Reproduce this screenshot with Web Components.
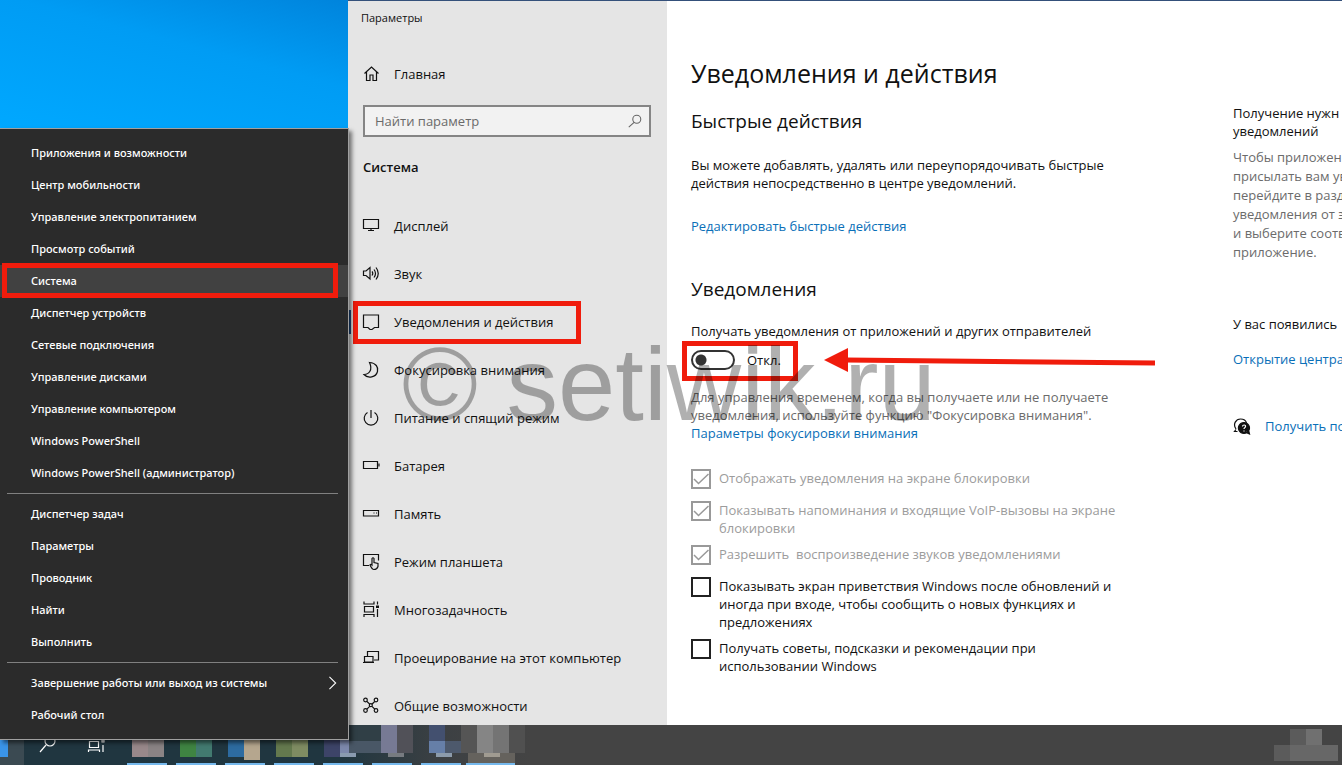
<!DOCTYPE html>
<html lang="ru">
<head>
<meta charset="utf-8">
<title>Параметры</title>
<style>
  html, body {
    margin: 0;
    height: 100%;
    overflow: hidden;
  }
  body {
    font-family: "Open Sans", "Noto Sans", sans-serif;
    font-size: 13px;
    line-height: 18px;
    color: #111;
    --accent: #0a6fb8;
    --mark: #f01c0c;
  }
</style>
</head>
<body>
<desktop-screen></desktop-screen>

<script>
const ICONS = {
  home: '<path d="M2.500 8.500 9.500 2l7 6.500M4.500 7v8.500h3.500V10h3v5.500h3.500V7"/>',
  display: '<path d="M1.500 2.500h15v9h-15zM9 11.500v2M6 13.500h6"/>',
  sound: '<path d="M1.500 6v4.500H4L8 14V2.500L4 6zM10 6.500q1.500 1.800 0 4M12 4.500q3 3.800 0 8M14 2.500q4.500 5.800 0 12"/>',
  message: '<path d="M1.500 2h15v12.500h-4L10 16.500H8l-2-2H1.500z"/>',
  moon: '<path d="M7.500 1.500C14 2 16.500 6 15.500 10.500 14 16.500 6 18 2 13.500c5 0 9-4.500 5.500-12z"/>',
  power: '<path d="M9 1v8M5.500 3.500a6.800 6.800 0 1 0 7 0"/>',
  battery: '<path d="M1.500 4.500h14v7h-14zM17 6.500v3"/>',
  storage: '<path d="M1.500 5.500h15V11h-15zM11.500 8h1M14 8h1"/>',
  tablet: '<path d="M7 12.500H1.500v-11h15v6M10 12V5.500q1-1.500 2 0v4l4 1v3q-1 3-4 3-2 0-4-4.500 1-1 2 0z"/>',
  tasks: '<path d="M2 .5v2.500h10V.5M2 16v-2.500h10V16M2.500 5.500h9v5.500h-9zM15.500.5v3M15.500 8v8"/><path d="M14 4.500h3v2.500h-3z" fill="currentColor" stroke="none"/>',
  project: '<path d="M5.500 8V2.500h11V11H12M2.500 7.500H11V13H2.500zM1 13.500h11"/>',
  shared: '<circle cx="3.500" cy="3" r="1.800"/><circle cx="14" cy="3" r="1.800"/><circle cx="3.500" cy="13.500" r="1.800"/><circle cx="14" cy="13.500" r="1.800"/><circle cx="8.800" cy="8.200" r="1.500"/><path d="m5 4.500 2.700 2.700m5-2.700-2.800 2.700m-5 5 2.800-2.800m5 2.800L10 9.400"/>',
  search: '<circle cx="11" cy="7" r="4.500"/><path d="m8 10.500-6 5.500"/>',
  help: '<path d="M3 12.500 1.500 14.500h3M3 12C-.5 7 3 2 7.500 2 11 2 13 4 13.500 6"/><path d="M11 5.500a5.500 5.500 0 1 1-.1 0zM12 15l4.500 2-1-4z" fill="currentColor"/><path d="M9.500 9.500c0-2 3.500-2 3 .2-.2 1-1.500 1-1.500 2.300M11 13.500v1" stroke="#fff"/>',
  chevron: '<path d="m5 2 7 7-7 7"/>'
};

// Registers an element whose shadow root is filled from a markup function
function define(name, render) {
  customElements.define(name, class extends HTMLElement {
    constructor() {
      super();
      this.attachShadow({ mode: 'open' });
    }
    connectedCallback() {
      this.shadowRoot.innerHTML = render(this);
    }
  });
}

define('ui-icon', (el) => `
  <style>
    :host { display: block; flex: none; width: 18px; height: 18px; }
    svg { display: block; width: 100%; height: 100%; }
  </style>
  <svg viewBox="0 0 18 18" fill="none" stroke="currentColor" stroke-width="1.2" aria-hidden="true">${ICONS[el.getAttribute('name')]}</svg>
`);

define('menu-item', (el) => `
  <style>
    :host { display: block; position: relative; }
    button {
      display: flex;
      align-items: center;
      justify-content: space-between;
      width: 100%;
      height: 32px;
      padding: 0 7px 0 31px;
      border: 0;
      background: transparent;
      color: #fff;
      font: 500 11px/16px "Noto Sans", "Open Sans", sans-serif;
      text-align: left;
    }
    :host([active]) button { background: #414141; }
    .mark {
      position: absolute;
      inset: -2px 10px -1px 2px;
      border: 5px solid var(--mark);
    }
    ui-icon { width: 16px; height: 16px; }
  </style>
  <button type="button"><slot></slot>${el.hasAttribute('submenu') ? '<ui-icon name="chevron"></ui-icon>' : ''}</button>
  ${el.hasAttribute('active') ? '<div class="mark"></div>' : ''}
`);

define('start-menu', () => `
  <style>
    :host {
      display: block;
      box-sizing: border-box;
      width: 349px;
      padding: 8px 0;
      background: #2b2b2b;
      border: solid #a0a0a0;
      border-width: 1px 1px 1px 0;
      box-shadow: 3px 3px 4px rgba(0, 0, 0, .5);
    }
    hr {
      height: 1px;
      margin: 4px 10px 4px 7px;
      border: 0;
      background: #808080;
    }
  </style>
  <menu-item>Приложения и возможности</menu-item>
  <menu-item>Центр мобильности</menu-item>
  <menu-item>Управление электропитанием</menu-item>
  <menu-item>Просмотр событий</menu-item>
  <menu-item active>Система</menu-item>
  <menu-item>Диспетчер устройств</menu-item>
  <menu-item>Сетевые подключения</menu-item>
  <menu-item>Управление дисками</menu-item>
  <menu-item>Управление компьютером</menu-item>
  <menu-item>Windows PowerShell</menu-item>
  <menu-item>Windows PowerShell (администратор)</menu-item>
  <hr>
  <menu-item>Диспетчер задач</menu-item>
  <menu-item>Параметры</menu-item>
  <menu-item>Проводник</menu-item>
  <menu-item>Найти</menu-item>
  <menu-item>Выполнить</menu-item>
  <hr>
  <menu-item submenu>Завершение работы или выход из системы</menu-item>
  <menu-item>Рабочий стол</menu-item>
`);

define('nav-item', (el) => `
  <style>
    :host { display: block; flex: none; position: relative; }
    a {
      display: flex;
      align-items: center;
      gap: 14px;
      height: 48px;
      padding-left: 14px;
      color: #111;
      text-decoration: none;
      white-space: nowrap;
    }
    :host([compact]) a { height: 32px; }
    :host([active])::before {
      content: "";
      position: absolute;
      left: 0;
      top: 12px;
      width: 3px;
      height: 24px;
      background: #1f4a80;
    }
    .mark {
      position: absolute;
      left: 5px;
      top: 3px;
      width: 218px;
      height: 33px;
      border: 5px solid var(--mark);
    }
  </style>
  <a href="#"><ui-icon name="${el.getAttribute('icon')}"></ui-icon><slot></slot></a>
  ${el.hasAttribute('active') ? '<div class="mark"></div>' : ''}
`);

define('settings-nav', () => `
  <style>
    :host {
      display: flex;
      flex-direction: column;
      background: #e5e5e5;
      overflow: hidden;
    }
    .title { padding: 9px 13px 0; font-size: 11px; line-height: 16px; }
    .home { margin-top: 32px; }
    .search {
      display: flex;
      flex: none;
      align-items: center;
      box-sizing: border-box;
      height: 32px;
      margin: 15px 16px 0 15px;
      padding: 0 6px 0 10px;
      border: 2px solid #858585;
      background: #f2f2f2;
      color: #666;
    }
    input {
      flex: 1;
      min-width: 0;
      padding: 0;
      border: 0;
      outline: 0;
      background: transparent;
      font: inherit;
    }
    input::placeholder { color: #6a6a6a; opacity: 1; }
    .search ui-icon { width: 16px; height: 16px; }
    h2 { margin: 21px 15px 26px; font-size: 13px; font-weight: 600; line-height: 18px; }
  </style>
  <div class="title">Параметры</div>
  <nav-item class="home" icon="home" compact>Главная</nav-item>
  <label class="search"><input type="text" placeholder="Найти параметр" aria-label="Найти параметр"><ui-icon name="search"></ui-icon></label>
  <h2>Система</h2>
  <nav>
    <nav-item icon="display">Дисплей</nav-item>
    <nav-item icon="sound">Звук</nav-item>
    <nav-item icon="message" active>Уведомления и действия</nav-item>
    <nav-item icon="moon">Фокусировка внимания</nav-item>
    <nav-item icon="power">Питание и спящий режим</nav-item>
    <nav-item icon="battery">Батарея</nav-item>
    <nav-item icon="storage">Память</nav-item>
    <nav-item icon="tablet">Режим планшета</nav-item>
    <nav-item icon="tasks">Многозадачность</nav-item>
    <nav-item icon="project">Проецирование на этот компьютер</nav-item>
    <nav-item icon="shared">Общие возможности</nav-item>
  </nav>
`);

define('check-row', (el) => `
  <style>
    :host { display: block; }
    label {
      display: flex;
      gap: 8px;
      min-height: 24px;
      white-space: pre-wrap;
    }
    :host([locked]) label { color: #9c9c9c; }
    input {
      appearance: none;
      flex: none;
      box-sizing: border-box;
      width: 20px;
      height: 20px;
      margin: 0;
      border: 2px solid #222;
      background: #fff;
    }
    input:disabled { border-color: #999; }
    input:checked {
      background-image: url("data:image/svg+xml,%3Csvg xmlns='http://www.w3.org/2000/svg' viewBox='0 0 16 16'%3E%3Cpath d='m1 8 4.500 4.500L15.500 3' fill='none' stroke='%23999' stroke-width='1.500'/%3E%3C/svg%3E");
    }
  </style>
  <label><input type="checkbox" ${el.hasAttribute('locked') ? 'checked disabled' : ''}><span><slot></slot></span></label>
`);

define('toggle-switch', () => `
  <style>
    :host { display: block; position: relative; width: fit-content; }
    label { display: flex; align-items: center; gap: 12px; height: 20px; }
    input {
      appearance: none;
      box-sizing: border-box;
      width: 44px;
      height: 20px;
      margin: 0;
      border: 2px solid #333;
      border-radius: 10px;
      background: radial-gradient(circle at 8px 8px, #333 5px, transparent 6px) #fff;
    }
    .mark {
      position: absolute;
      inset: -9px -17px -11px -9px;
      border: 5px solid var(--mark);
    }
  </style>
  <label><input type="checkbox" role="switch"><slot></slot></label>
  <div class="mark"></div>
`);

define('settings-page', () => `
  <style>
    :host {
      display: grid;
      grid-template-columns: 430px minmax(0, 1fr);
      column-gap: 112px;
      padding: 54px 0 0 24px;
      background: #fff;
      overflow: hidden;
    }
    h1 { margin: 0 0 16px; font-size: 25px; font-weight: 400; line-height: 36px; white-space: nowrap; }
    h2 { margin: 0; font-size: 19px; font-weight: 400; line-height: 28px; }
    p { margin: 0; white-space: pre-line; }
    a { color: var(--accent); text-decoration: none; white-space: nowrap; }
    .quick p { margin: 21px 0 25px; }
    .notices { margin-top: 40px; }
    .notices h2 { margin-bottom: 19px; }
    toggle-switch { margin: 10px 0 18px; }
    .muted { color: #6b6b6b; }
    .checks { display: grid; gap: 8px; margin-top: 27px; }
    aside { padding-top: 49px; }
    aside p { white-space: pre; }
    aside .muted { margin: 8px 0 53px; line-height: 19px; }
    aside .center { display: block; margin: 17px 0 49px; }
    .support { display: flex; align-items: center; gap: 14px; }
  </style>
  <main>
    <h1>Уведомления и действия</h1>
    <section class="quick">
      <h2>Быстрые действия</h2>
      <p>Вы можете добавлять, удалять или переупорядочивать быстрые
действия непосредственно в центре уведомлений.</p>
      <a href="#">Редактировать быстрые действия</a>
    </section>
    <section class="notices">
      <h2>Уведомления</h2>
      <p>Получать уведомления от приложений и других отправителей</p>
      <toggle-switch>Откл.</toggle-switch>
      <p class="muted">Для управления временем, когда вы получаете или не получаете
уведомления, используйте функцию "Фокусировка внимания".</p>
      <a href="#">Параметры фокусировки внимания</a>
      <div class="checks">
        <check-row locked>Отображать уведомления на экране блокировки</check-row>
        <check-row locked>Показывать напоминания и входящие VoIP-вызовы на экране
блокировки</check-row>
        <check-row locked>Разрешить  воспроизведение звуков уведомлениями</check-row>
        <check-row>Показывать экран приветствия Windows после обновлений и
иногда при входе, чтобы сообщить о новых функциях и
предложениях</check-row>
        <check-row>Получать советы, подсказки и рекомендации при
использовании Windows</check-row>
      </div>
    </section>
  </main>
  <aside>
    <p>Получение нужн
уведомлений</p>
    <p class="muted">Чтобы приложен
присылать вам ув
перейдите в разд
уведомления от э
и выберите соотв
приложение.</p>
    <p>У вас появились</p>
    <a class="center" href="#">Открытие центра</a>
    <div class="support"><ui-icon name="help"></ui-icon><a href="#">Получить по</a></div>
  </aside>
`);

define('task-bar', () => {
  // x, y, width, height, colour of the pixelated app tiles
  const tiles = [
    [0, 0, 24, 40, '#3b4a52'], [0, 15, 8, 17, '#3a94e8'],
    [132, 15, 16, 17, '#98888a'], [148, 15, 16, 17, '#8a8384'],
    [180, 15, 16, 17, '#3f8442'], [196, 15, 16, 17, '#427a70'],
    [228, 15, 16, 17, '#2d6ba0'], [244, 15, 16, 20, '#b5a68e'],
    [276, 15, 16, 17, '#64794e'], [292, 15, 16, 17, '#7f8c62'],
    [324, 15, 16, 17, '#3d4468'], [340, 15, 16, 17, '#7c88ac'],
    [349, 0, 32, 16, '#303f46'], [349, 16, 32, 12, '#495766'],
    [381, 0, 16, 28, '#777a94'], [397, 0, 16, 28, '#515158'],
    [429, 0, 16, 16, '#43506f'], [429, 16, 16, 12, '#667fa8'],
    [445, 16, 16, 12, '#4d596c'], [461, 0, 16, 28, '#555'],
    [477, 0, 16, 28, '#858585'], [493, 0, 16, 28, '#747474'],
    [509, 0, 16, 28, '#505050'],
    [340, 28, 16, 4, '#8a9bb0'], [388, 28, 16, 4, '#777b80'],
    [436, 28, 16, 4, '#8c9bab'], [468, 28, 47, 10, '#65625d'], [484, 28, 16, 4, '#a09b91']
  ];
  const active = [[127, 40], [176, 40], [225, 40], [274, 40], [323, 40], [372, 40], [421, 40], [466, 49]];
  return `
    <style>
      :host {
        display: flex;
        justify-content: space-between;
        height: 40px;
        background: linear-gradient(90deg, #203640 340px, #3c4043 440px, #444 530px);
        overflow: hidden;
      }
      svg { display: block; flex: none; }
    </style>
    <svg width="540" height="40" aria-hidden="true">
      ${tiles.map(([x, y, w, h, c]) => `<rect x="${x}" y="${y}" width="${w}" height="${h}" fill="${c}"/>`).join('')}
      ${active.map(([x, w]) => `<rect x="${x}" y="38" width="${w}" height="2" fill="#76b9ed"/>`).join('')}
      <g fill="none" stroke="#fff" stroke-width="1.2">
        <circle cx="50" cy="16" r="5"/><path d="m46 20-6 7"/>
        <path d="M89.500 16.500h9v6h-9zM88.500 27v-2h11v2M103 20v7"/><path d="M102 15h2v2h-2z"/>
      </g>
    </svg>
    <svg width="70" height="40" aria-hidden="true">
      <path d="M2 20h16V4h32v16h16v16H2z" fill="#5b5b5b"/>
      <path d="M18 20h48v16H18z" fill="#676767"/>
      <path d="M34 4h16v16H34z" fill="#707070"/>
    </svg>
  `;
});

define('desktop-screen', () => `
  <style>
    :host {
      display: grid;
      grid-template-rows: minmax(0, 1fr) auto;
      position: relative;
      height: 100vh;
      overflow: hidden;
      background: linear-gradient(15deg, #00a8ff 0, #009cf4 60%, #0084dc 100%) 0 0 / 348px 128px no-repeat #0080d8;
    }
    .window {
      display: grid;
      grid-template-columns: 319px minmax(0, 1fr);
      min-height: 0;
      margin-left: 348px;
      border-top: 1px solid #34507a;
      background: #fff;
    }
    start-menu { position: absolute; left: 0; bottom: 25px; }
    .arrow { position: absolute; left: 822px; top: 346px; }
    .watermark {
      position: absolute;
      left: 402px;
      top: 325px;
      font: 103px/120px "Liberation Sans", sans-serif;
      color: rgba(0, 0, 0, .31);
      white-space: nowrap;
      pointer-events: none;
    }
  </style>
  <div class="window">
    <settings-nav></settings-nav>
    <settings-page></settings-page>
  </div>
  <task-bar></task-bar>
  <start-menu></start-menu>
  <div class="watermark">© setiwik.ru</div>
  <svg class="arrow" width="336" height="30" aria-hidden="true">
    <path d="M2 14 26 2v24z" fill="#f01c0c"/>
    <path d="m24 14 309 3" stroke="#f01c0c" stroke-width="5"/>
  </svg>
`);
</script>
</body>
</html>
